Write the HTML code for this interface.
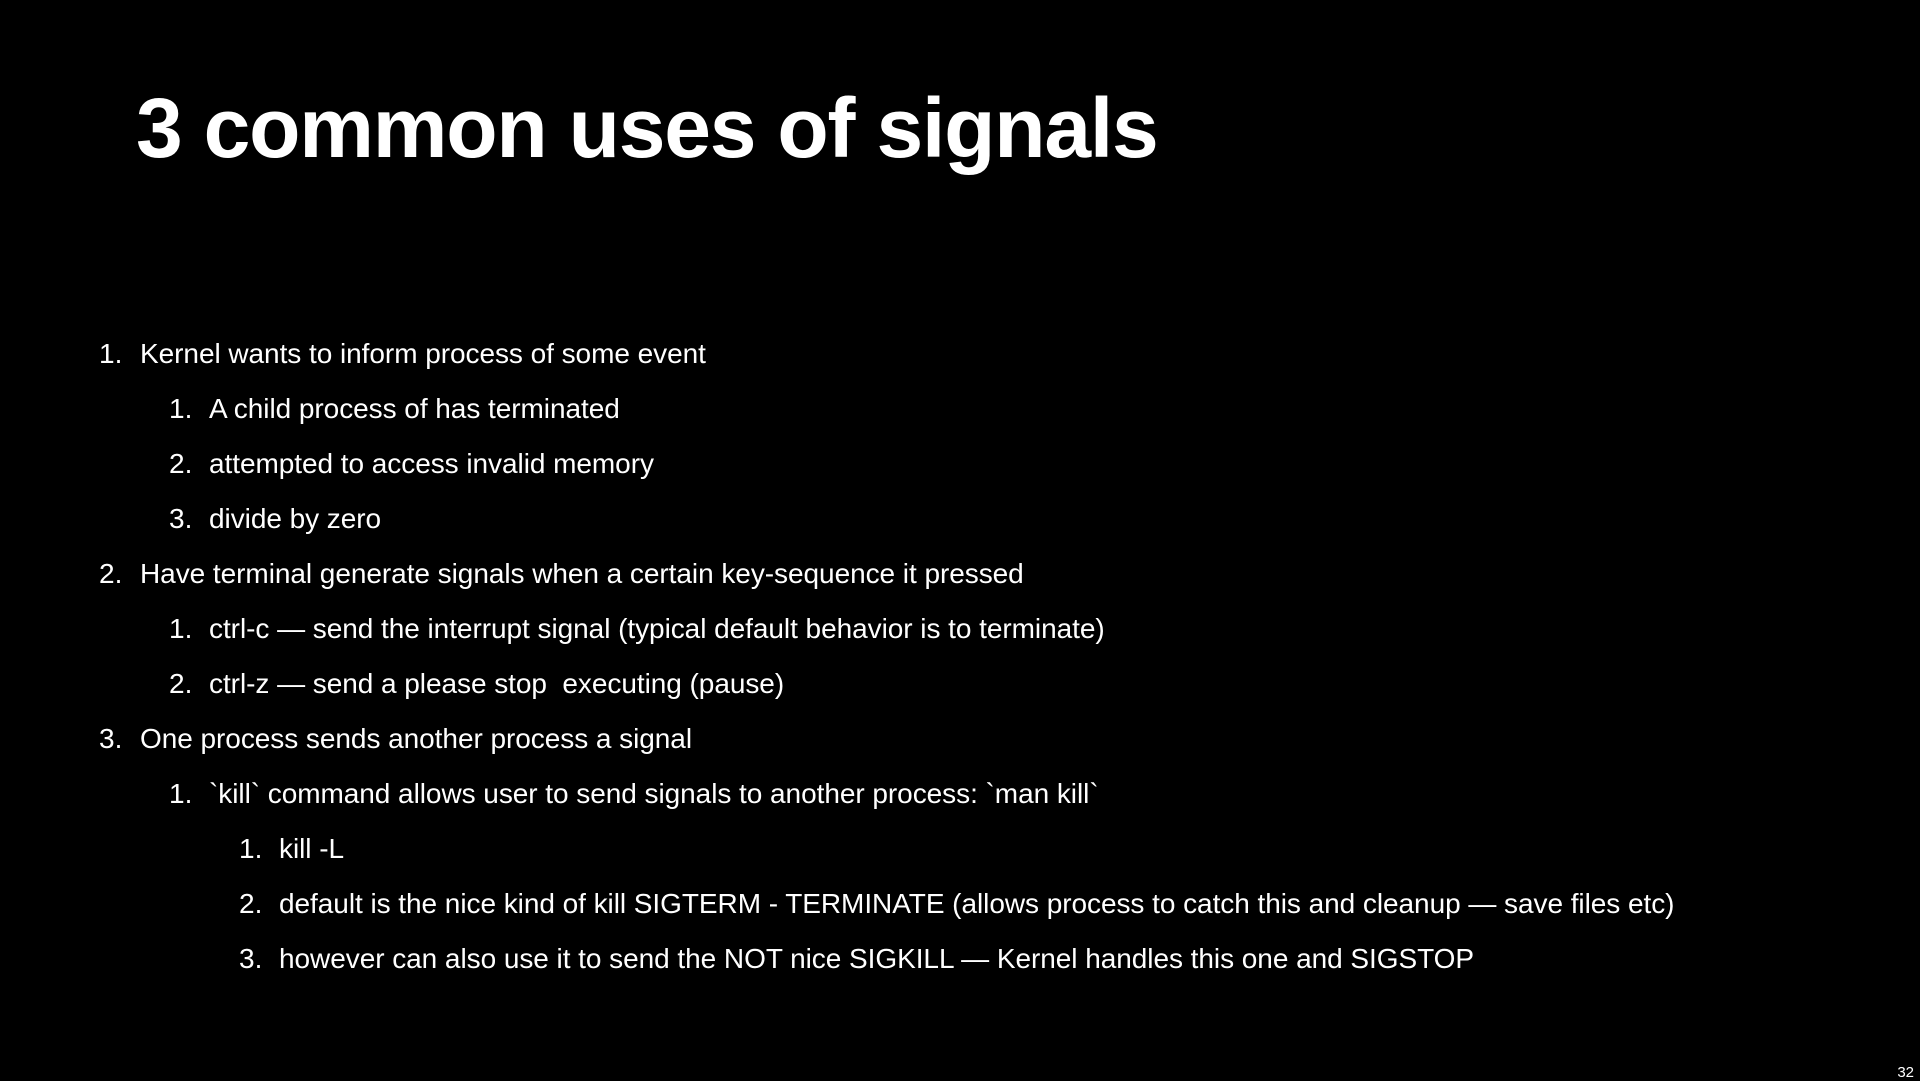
<!DOCTYPE html>
<html><head><meta charset="utf-8"><style>
html,body{margin:0;padding:0;background:#000;width:1920px;height:1080px;overflow:hidden;font-family:"Liberation Sans",Arial,sans-serif;color:#fff}
h1{position:absolute;left:136px;top:80px;margin:0;font-size:84px;font-weight:bold;letter-spacing:-1.2px}
.l{position:absolute;font-size:28px;white-space:pre;line-height:34px;letter-spacing:-0.05px}
.n{position:absolute;font-size:28px;line-height:34px}
.pg{position:absolute;right:6px;bottom:-1px;font-size:15px}
</style></head><body>
<h1>3 common uses of signals</h1>
<div class="n" style="left:99px;top:337px">1.</div><div class="l" style="left:140px;top:337px">Kernel wants to inform process of some event</div>
<div class="n" style="left:169px;top:392px">1.</div><div class="l" style="left:209px;top:392px">A child process of has terminated</div>
<div class="n" style="left:169px;top:447px">2.</div><div class="l" style="left:209px;top:447px">attempted to access invalid memory</div>
<div class="n" style="left:169px;top:502px">3.</div><div class="l" style="left:209px;top:502px">divide by zero</div>
<div class="n" style="left:99px;top:557px">2.</div><div class="l" style="left:140px;top:557px">Have terminal generate signals when a certain key-sequence it pressed</div>
<div class="n" style="left:169px;top:612px">1.</div><div class="l" style="left:209px;top:612px">ctrl-c — send the interrupt signal (typical default behavior is to terminate)</div>
<div class="n" style="left:169px;top:667px">2.</div><div class="l" style="left:209px;top:667px">ctrl-z — send a please stop  executing (pause)</div>
<div class="n" style="left:99px;top:722px">3.</div><div class="l" style="left:140px;top:722px">One process sends another process a signal</div>
<div class="n" style="left:169px;top:777px">1.</div><div class="l" style="left:209px;top:777px">`kill` command allows user to send signals to another process: `man kill`</div>
<div class="n" style="left:239px;top:832px">1.</div><div class="l" style="left:279px;top:832px">kill -L</div>
<div class="n" style="left:239px;top:887px">2.</div><div class="l" style="left:279px;top:887px">default is the nice kind of kill SIGTERM - TERMINATE (allows process to catch this and cleanup — save files etc)</div>
<div class="n" style="left:239px;top:942px">3.</div><div class="l" style="left:279px;top:942px">however can also use it to send the NOT nice SIGKILL — Kernel handles this one and SIGSTOP</div>
<div class="pg">32</div>
</body></html>
